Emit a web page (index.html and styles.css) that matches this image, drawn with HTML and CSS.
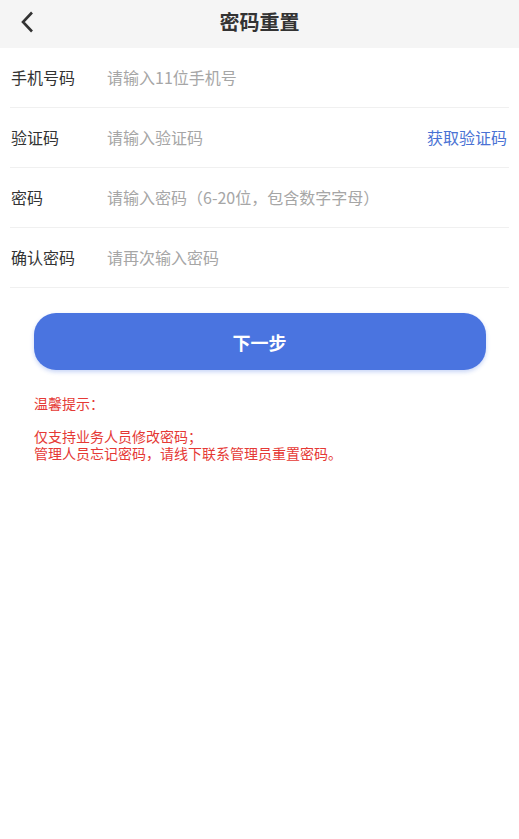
FILE: index.html
```html
<!DOCTYPE html>
<html lang="zh-CN">
<head>
    <meta charset="UTF-8">
    <meta name="viewport" content="width=device-width, initial-scale=1.0">
    <title>密码重置</title>
    <link rel="stylesheet" href="styles.css">
</head>
<body>
    <div class="header">
        <a class="back" href="#">
            <svg width="14" height="22" viewBox="0 0 14 22"><path d="M12 1.5 L3 11 L12 20.5" fill="none" stroke="#333" stroke-width="2.6"/></svg>
        </a>
        <h1>密码重置</h1>
    </div>
    <form class="form">
        <div class="row">
            <label>手机号码</label>
            <input type="text" placeholder="请输入11位手机号">
        </div>
        <div class="row">
            <label>验证码</label>
            <input type="text" placeholder="请输入验证码">
            <a class="code" href="#">获取验证码</a>
        </div>
        <div class="row">
            <label>密码</label>
            <input type="password" placeholder="请输入密码（6-20位，包含数字字母）">
        </div>
        <div class="row">
            <label>确认密码</label>
            <input type="password" placeholder="请再次输入密码">
        </div>
    </form>
    <button class="next" type="button">下一步</button>
    <div class="tips">
        <p>温馨提示：</p>
        <p>&nbsp;</p>
        <p>仅支持业务人员修改密码；</p>
        <p>管理人员忘记密码，请线下联系管理员重置密码。</p>
    </div>
</body>
</html>
```

FILE: styles.css
```css
body{margin:0;background:#fff;font-family:"Noto Sans CJK SC","Noto Sans",sans-serif;color:#333;}
.header{height:48px;background:#f5f5f5;display:flex;align-items:center;justify-content:center;position:relative;box-sizing:border-box;padding-bottom:4px;}
.header h1{margin:0;font-size:20px;line-height:24px;font-weight:bold;color:#333;}
.back{position:absolute;left:20px;top:11px;display:block;width:14px;height:22px;}
.back svg{display:block;}
.form{margin:0 10px;}
.row{height:60px;display:flex;align-items:center;border-bottom:1px solid #f0f0f0;box-sizing:border-box;padding-bottom:1px;}
.row label{width:96px;padding-left:1px;font-size:16px;color:#333;flex-shrink:0;}
.row input{flex:1;border:none;outline:none;font-size:16px;font-family:inherit;padding:0;color:#333;background:transparent;min-width:0;}
.row input::placeholder{color:#a6a6a6;}
.code{font-size:16px;color:#4a72d4;text-decoration:none;margin-right:2px;}
.next{display:block;margin:25px auto 0;width:452px;height:57px;border:none;border-radius:22px;background:#4a74e0;color:#fff;font-size:18px;font-weight:bold;font-family:inherit;box-shadow:0 2px 4px rgba(74,116,224,0.3);}
.tips{margin:25px 34px 0;color:#e53935;font-size:14px;line-height:16.5px;}
.tips p{margin:0;}
```
